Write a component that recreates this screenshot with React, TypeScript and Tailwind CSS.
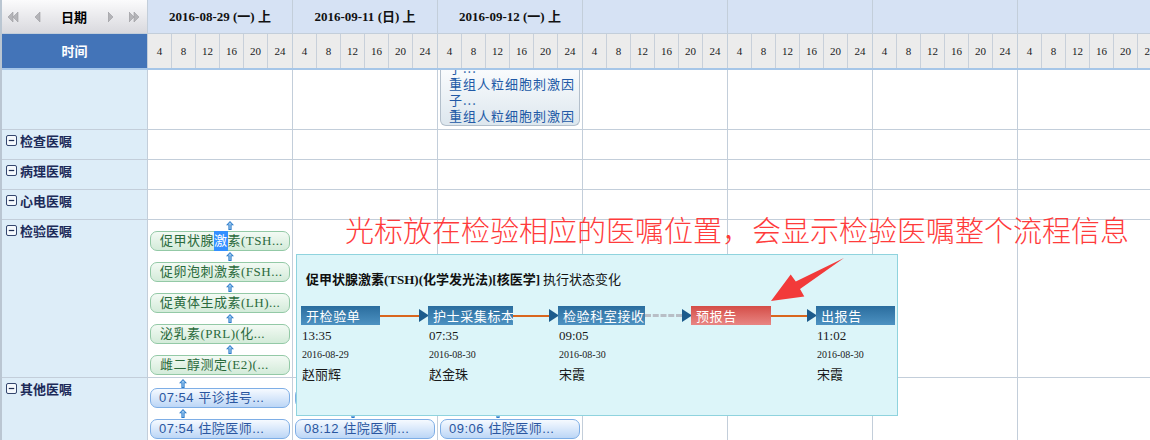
import React from "react";

const SERIF = "font-['Liberation_Serif','Noto_Sans_CJK_SC',serif]";
const SANS = "font-['Liberation_Sans','Noto_Sans_CJK_SC',sans-serif]";
const CJK = "font-['Noto_Sans_CJK_SC',sans-serif]";

const days = [
  { date: "2016-08-29", wk: "一" },
  { date: "2016-09-11", wk: "日" },
  { date: "2016-09-12", wk: "一" },
  null,
  null,
  null,
  null,
];

const hours = [4, 8, 12, 16, 20, 24];

const groups = [
  { key: "blank", label: "", h: "h-[60px]" },
  { key: "jc", label: "检查医嘱", h: "h-[30px]" },
  { key: "bl", label: "病理医嘱", h: "h-[30px]" },
  { key: "xd", label: "心电医嘱", h: "h-[30px]" },
  { key: "jy", label: "检验医嘱", h: "h-[158px]" },
  { key: "qt", label: "其他医嘱", h: "h-[80px]" },
];

const labOrders = [
  "促卵泡刺激素(FSH...",
  "促黄体生成素(LH)...",
  "泌乳素(PRL)(化...",
  "雌二醇测定(E2)(...",
];

const steps = [
  { name: "开检验单", w: "w-[79px]", time: "13:35", date: "2016-08-29", who: "赵丽辉" },
  { name: "护士采集标本", w: "w-[85px]", time: "07:35", date: "2016-08-30", who: "赵金珠" },
  { name: "检验科室接收", w: "w-[87px]", time: "09:05", date: "2016-08-30", who: "宋霞" },
  { name: "预报告", w: "w-[80px]", red: true },
  { name: "出报告", w: "w-[79px]", time: "11:02", date: "2016-08-30", who: "宋霞" },
];

const links = [
  { w: "w-[48px]", dashed: false },
  { w: "w-[45px]", dashed: false },
  { w: "w-[46px]", dashed: true },
  { w: "w-[45px]", dashed: false },
];

function UpArrow({ className }: { className?: string }) {
  return (
    <svg width="8" height="9" viewBox="0 0 8 9" className={className}>
      <path d="M4 0 L8 4.2 L5.6 4.2 L5.6 9 L2.4 9 L2.4 4.2 L0 4.2 Z" fill="#2c7bc9" />
      <path d="M4 1.3 L6.2 3.5 L4.6 3.5 L4.6 8 L3.4 8 L3.4 3.5 L1.8 3.5 Z" fill="#9cc8f0" />
    </svg>
  );
}

function MinusBox() {
  return (
    <svg width="11" height="11" viewBox="0 0 11 11" className="shrink-0">
      <rect x="0.5" y="0.5" width="10" height="10" rx="1.5" fill="#f4f8fc" stroke="#34466e" />
      <line x1="2.8" y1="5.5" x2="8.2" y2="5.5" stroke="#1d2c52" strokeWidth="1.2" />
    </svg>
  );
}

function NavArrow({ dir, double }: { dir: "l" | "r"; double?: boolean }) {
  const one = (x: number) =>
    dir === "l" ? `M${x + 5} 1 L${x} 6 L${x + 5} 11 Z` : `M${x} 1 L${x + 5} 6 L${x} 11 Z`;
  return (
    <svg width={double ? 11 : 6} height="12" viewBox={`0 0 ${double ? 11 : 6} 12`}>
      <path d={one(0)} fill="#b4b4b8" stroke="#9a9aa0" strokeWidth="0.6" />
      {double && <path d={one(5)} fill="#b4b4b8" stroke="#9a9aa0" strokeWidth="0.6" />}
    </svg>
  );
}

function GreenPill({ children }: { children: React.ReactNode }) {
  return (
    <div
      className={`mx-[2px] flex h-[20px] items-center rounded-[7px] border border-[#93c9a6] bg-gradient-to-b from-[#f3faf4] to-[#d3ebd9] pl-[9px] text-[13px] tracking-[0.5px] whitespace-nowrap text-[#2a6a3c] ${SERIF}`}
    >
      {children}
    </div>
  );
}

function BluePill({ children }: { children: React.ReactNode }) {
  return (
    <div
      className={`mx-[2px] flex h-[20px] items-center rounded-[7px] border border-[#7eaee6] bg-gradient-to-b from-[#f6faff] to-[#bcd6f6] pl-[8px] text-[13px] tracking-[0.5px] whitespace-nowrap text-[#2a56a0] ${SANS}`}
    >
      {children}
    </div>
  );
}

function CellContent({ row, day }: { row: string; day: number }) {
  if (row === "blank" && day === 2) {
    return (
      <div className="mx-[2px] h-[56px] overflow-hidden rounded-b-[6px] border border-t-0 border-[#b3bfcb] bg-gradient-to-b from-[#f9fbfd] to-[#dde7ee]">
        <div className={`-mt-[26px] pl-[8px] pr-[4px] text-[13px] leading-[16px] tracking-[1px] text-[#2159a6] ${CJK}`}>
          <div>重组人粒细胞刺激因子...</div>
          <div>重组人粒细胞刺激因子...</div>
          <div>重组人粒细胞刺激因子...</div>
        </div>
      </div>
    );
  }
  if (row === "jy" && day === 0) {
    return (
      <div className="flex flex-col">
        <div className="flex h-[11px] items-center pl-[78px]">
          <UpArrow />
        </div>
        <GreenPill>
          促甲状腺<span className="bg-[#3390ff] text-white">激</span>素(TSH...
        </GreenPill>
        {labOrders.map((t) => (
          <React.Fragment key={t}>
            <div className="flex h-[11px] items-center pl-[78px]">
              <UpArrow />
            </div>
            <GreenPill>{t}</GreenPill>
          </React.Fragment>
        ))}
      </div>
    );
  }
  if (row === "qt" && day <= 2) {
    const second = ["07:54 住院医师...", "08:12 住院医师...", "09:06 住院医师..."][day];
    const first = ["07:54 平诊挂号...", "07:56 平诊挂号...", "09:02 平诊挂号..."][day];
    const ax = ["pl-[31px]", "pl-[56px]", "pl-[56px]"][day];
    return (
      <div className="flex flex-col">
        <div className={`flex h-[10px] items-center ${ax}`}>
          <UpArrow />
        </div>
        <BluePill>{first}</BluePill>
        <div className={`flex h-[11px] items-center ${ax}`}>
          <UpArrow />
        </div>
        <BluePill>{second}</BluePill>
      </div>
    );
  }
  return null;
}

function Tooltip() {
  return (
    <div className="absolute left-[296px] top-[254px] h-[162px] w-[602px] border border-[#8fd3de] bg-[#dcf5f9]">
      <div className={`pl-[9px] pt-[15px] text-[13px] leading-[18px] text-[#111] ${SERIF}`}>
        <span className="font-bold">促甲状腺激素(TSH)(化学发光法)[核医学]</span>
        <span className={CJK}> 执行状态变化</span>
      </div>
      <div className="mt-[17px] flex items-start pl-[4px]">
        {steps.map((s, i) => (
          <React.Fragment key={s.name}>
            <div className={`flex shrink-0 flex-col ${s.w}`}>
              <div
                className={`flex h-[19px] items-center overflow-hidden pl-[5px] text-[13px] tracking-[0.6px] whitespace-nowrap text-white ${CJK} ${
                  s.red
                    ? "bg-gradient-to-b from-[#d44c47] to-[#e88583]"
                    : "bg-gradient-to-b from-[#2a6d9e] to-[#4d92c2]"
                }`}
              >
                {s.name}
              </div>
              {s.time && (
                <div className="pl-[1px] text-[#1a1a1a]">
                  <div className={`mt-[3px] text-[13px] leading-[16px] ${SERIF}`}>{s.time}</div>
                  <div className={`mt-[5px] text-[10px] leading-[12px] ${SERIF}`}>{s.date}</div>
                  <div className={`mt-[5px] text-[13px] leading-[16px] ${CJK}`}>{s.who}</div>
                </div>
              )}
            </div>
            {i < links.length && (
              <div className={`flex h-[19px] shrink-0 items-center ${links[i].w}`}>
                <div
                  className={`flex-1 ${
                    links[i].dashed
                      ? "border-t-[3px] border-dashed border-[#b8bec6]"
                      : "h-[2px] bg-[#d9661e]"
                  }`}
                />
                <svg width="10" height="13" viewBox="0 0 10 13" className="-mr-[1px] shrink-0">
                  <path d="M0 0 L10 6.5 L0 13 Z" fill="#1c5b8c" />
                </svg>
              </div>
            )}
          </React.Fragment>
        ))}
      </div>
    </div>
  );
}

export default function App() {
  return (
    <div className={`relative h-[440px] w-[1150px] overflow-hidden bg-white ${SERIF}`}>
      <div className="flex w-max flex-col border-l-2 border-[#bac6d2]">
        {/* header row 1 */}
        <div className="flex h-[34px] border-b border-[#c3ceda]">
          <div className="flex w-[146px] shrink-0 items-center border-r border-[#c3ceda] bg-gradient-to-b from-[#fbfbfc] to-[#d9d9de] pl-[6px]">
            <NavArrow dir="l" double />
            <div className="ml-[16px]">
              <NavArrow dir="l" />
            </div>
            <div className={`ml-[20px] text-[13px] font-bold text-black ${CJK}`}>日期</div>
            <div className="ml-[21px]">
              <NavArrow dir="r" />
            </div>
            <div className="ml-[15px]">
              <NavArrow dir="r" double />
            </div>
          </div>
          {days.map((d, i) => (
            <div
              key={i}
              className="flex w-[145px] shrink-0 items-center justify-center border-r border-[#c3ceda] bg-[#d6e2f4] text-[13px] font-bold text-[#111]"
            >
              {d && (
                <span>
                  {d.date} ({d.wk}) 上
                </span>
              )}
            </div>
          ))}
        </div>
        {/* header row 2 */}
        <div className="flex h-[36px] border-b-2 border-[#a6c6e8]">
          <div className={`flex w-[146px] shrink-0 items-center justify-center border-r border-[#c3ceda] bg-[#4374b8] text-[13px] font-bold text-white ${CJK}`}>
            时间
          </div>
          {days.map((_, i) => (
            <div key={i} className="grid w-[145px] shrink-0 grid-cols-6 border-r border-[#c3ceda] bg-[#ececec]">
              {hours.map((h, j) => (
                <div
                  key={h}
                  className={`flex items-center justify-center text-[11px] text-[#1a1a1a] ${j < 5 ? "border-r border-[#c8d0da]" : ""}`}
                >
                  {h}
                </div>
              ))}
            </div>
          ))}
        </div>
        {/* body */}
        {groups.map((g) => (
          <div key={g.key} className={`flex ${g.h} border-b border-[#c3ceda]`}>
            <div className="flex w-[146px] shrink-0 items-start gap-[3px] border-r border-[#c3ceda] bg-[#ddedf8] pl-[4px] pt-[4px]">
              {g.label && (
                <>
                  <div className="pt-[1px]">
                    <MinusBox />
                  </div>
                  <span className={`text-[13px] leading-[14px] font-bold text-[#1c2a58] ${CJK}`}>{g.label}</span>
                </>
              )}
            </div>
            {days.map((_, i) => (
              <div key={i} className="w-[145px] shrink-0 border-r border-[#c3ceda]">
                <CellContent row={g.key} day={i} />
              </div>
            ))}
          </div>
        ))}
      </div>

      <Tooltip />

      <div className={`absolute left-[345px] top-[211px] flex text-[29px] leading-[36px] font-light whitespace-nowrap text-[#ff3b3b] ${CJK}`}>
        <span>光标放在检验相应的医嘱位置</span>
        <span className="inline-block w-[30px] overflow-hidden">，</span>
        <span>会显示检验医嘱整个流程信息</span>
      </div>

      <svg width="100" height="60" viewBox="0 0 100 60" className="absolute left-[760px] top-[255px]">
        <polygon
          points="11,46 30.7,19.4 35.8,26.6 84,3 40,34 44.3,41.4"
          fill="#f23a3a"
        />
      </svg>
    </div>
  );
}
